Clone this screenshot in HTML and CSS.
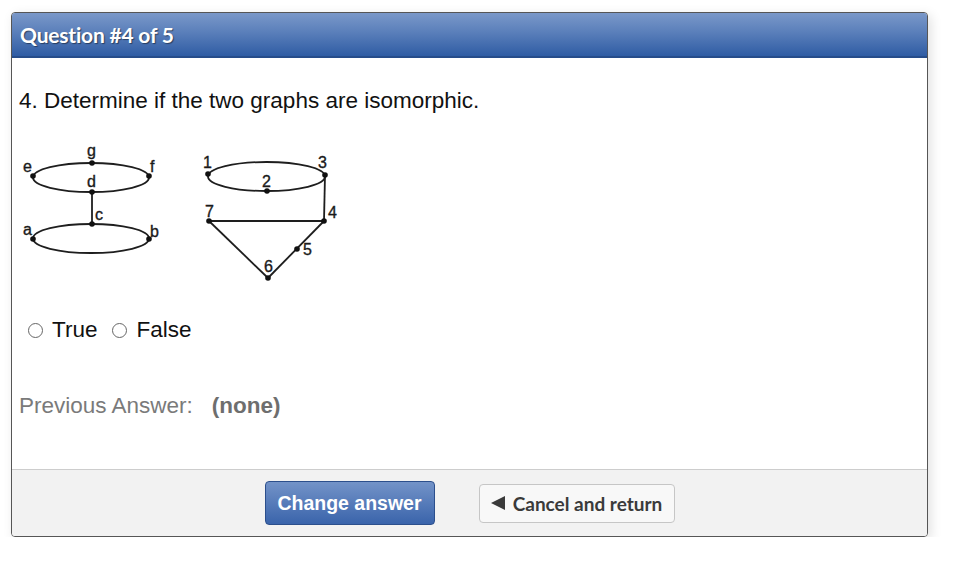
FILE: index.html
```html
<!DOCTYPE html>
<html>
<head>
<meta charset="utf-8">
<link rel="stylesheet" href="styles.css">
</head>
<body>
<div class="box">
  <div class="hdr"><h1 class="title">Question #4 of 5</h1></div>
  <div class="content">
    <p class="question">4. Determine if the two graphs are isomorphic.</p>
    <svg class="graphs" width="330" height="150" viewBox="19 140 330 150" xmlns="http://www.w3.org/2000/svg">
      <g fill="none" stroke="#1e1e1e" stroke-width="1.8">
        <ellipse cx="91" cy="177.5" rx="58" ry="14.5"/>
        <ellipse cx="91" cy="238.5" rx="58" ry="14.5"/>
        <line x1="92" y1="192" x2="92" y2="224"/>
        <ellipse cx="266.5" cy="176.5" rx="58.5" ry="14.5"/>
        <line x1="325" y1="175" x2="324" y2="221"/>
        <line x1="209" y1="221" x2="324" y2="221"/>
        <line x1="209" y1="221" x2="268" y2="278"/>
        <line x1="268" y1="278" x2="324" y2="221"/>
      </g>
      <g fill="#111">
        <circle cx="33" cy="176" r="2.8"/>
        <circle cx="149" cy="176" r="2.8"/>
        <circle cx="92" cy="163" r="2.8"/>
        <circle cx="92" cy="192" r="2.8"/>
        <circle cx="92" cy="224" r="2.8"/>
        <circle cx="33" cy="239" r="2.8"/>
        <circle cx="149" cy="239" r="2.8"/>
        <circle cx="208" cy="174" r="2.8"/>
        <circle cx="325" cy="175" r="2.8"/>
        <circle cx="267" cy="191" r="2.8"/>
        <circle cx="324" cy="221" r="2.8"/>
        <circle cx="209" cy="221" r="2.8"/>
        <circle cx="268" cy="278" r="2.8"/>
        <circle cx="297" cy="249" r="2.8"/>
      </g>
      <g class="lbl">
        <text x="23" y="172">e</text>
        <text x="150" y="172">f</text>
        <text x="87" y="156">g</text>
        <text x="87" y="187">d</text>
        <text x="95" y="220">c</text>
        <text x="23" y="235">a</text>
        <text x="150" y="237">b</text>
        <text x="203" y="168">1</text>
        <text x="318" y="168">3</text>
        <text x="262" y="187">2</text>
        <text x="205" y="217">7</text>
        <text x="328" y="218">4</text>
        <text x="303" y="255">5</text>
        <text x="264" y="272">6</text>
      </g>
    </svg>
    <div class="choices">
      <label class="choice"><input type="radio" name="ans" class="radio"><span>True</span></label>
      <label class="choice"><input type="radio" name="ans" class="radio"><span>False</span></label>
    </div>
    <p class="prev">Previous Answer:<b class="none">(none)</b></p>
  </div>
  <div class="footer">
    <button class="btn primary">Change answer</button>
    <button class="btn secondary"><svg class="tri" width="15" height="14" viewBox="0 0 15 14"><polygon points="0,7 14,0 14,14" fill="#3a3a3a"/></svg>Cancel and return</button>
  </div>
</div>
</body>
</html>
```
FILE: styles.css
```css
html, body {
  margin: 0;
  padding: 0;
  background: #ffffff;
}
body {
  padding: 12px 0 0 11px;
  font-family: "Liberation Sans", Arial, sans-serif;
}
.box {
  width: 915px;
  border: 1px solid #565656;
  border-radius: 4px;
  box-shadow: 3px 3px 12px rgba(0, 0, 0, 0.12);
  background: #fff;
  overflow: hidden;
}
.hdr {
  height: 43px;
  border-bottom: 2px solid #264c8a;
  background: linear-gradient(to bottom, #7a98c9 0%, #5a7fba 45%, #2f5ca4 100%);
  display: flex;
  align-items: center;
  padding-left: 8px;
}
.title {
  margin: 0;
  font-family: Lato, "Open Sans", sans-serif;
  font-weight: 700;
  font-size: 21px;
  color: #fff;
  text-shadow: 1px 1px 1px rgba(0, 0, 0, 0.45);
  letter-spacing: -0.2px;
}
.content {
  padding: 30px 7px 50px;
}
.question {
  margin: 0;
  font-size: 22.5px;
  line-height: 26px;
  color: #111;
}
.graphs {
  display: block;
  margin-top: 26px;
}
.lbl text {
  font-family: "Liberation Sans", Arial, sans-serif;
  font-size: 16px;
  fill: #1a1a1a;
  stroke: #1a1a1a;
  stroke-width: 0.35;
}
.choices {
  margin-top: 27px;
  padding-left: 9px;
  display: flex;
  font-size: 22.5px;
  line-height: 26px;
  color: #111;
}
.choice {
  display: flex;
  align-items: center;
  margin-right: 15px;
}
.radio {
  appearance: none;
  -webkit-appearance: none;
  width: 15px;
  height: 15px;
  margin: 0 9px 0 0;
  border: 1px solid #666;
  border-radius: 50%;
  background: #fff;
}
.prev {
  margin: 50px 0 0;
  font-size: 22.5px;
  line-height: 26px;
  color: #7a7a7a;
}
.none {
  margin-left: 19px;
  color: #6e6e6e;
}
.footer {
  height: 66px;
  border-top: 1px solid #cdcdcd;
  background: #f2f2f2;
  display: flex;
  align-items: center;
  justify-content: center;
  gap: 44px;
}
.btn {
  display: flex;
  align-items: center;
  justify-content: center;
  border-radius: 4px;
  cursor: pointer;
  padding: 0;
}
.primary {
  width: 170px;
  height: 44px;
  border: 1px solid #2c4f8c;
  background: linear-gradient(to bottom, #7393c8 0%, #3a64ab 100%);
  color: #fff;
  font-family: "Liberation Sans", Arial, sans-serif;
  font-weight: 700;
  font-size: 19.5px;
}
.secondary {
  width: 196px;
  height: 39px;
  border: 1px solid #c6c6c6;
  background: #f8f8f8;
  color: #3a3a3a;
  font-family: Lato, "Open Sans", sans-serif;
  font-weight: 700;
  font-size: 19px;
}
.tri {
  margin-right: 7px;
}
```
